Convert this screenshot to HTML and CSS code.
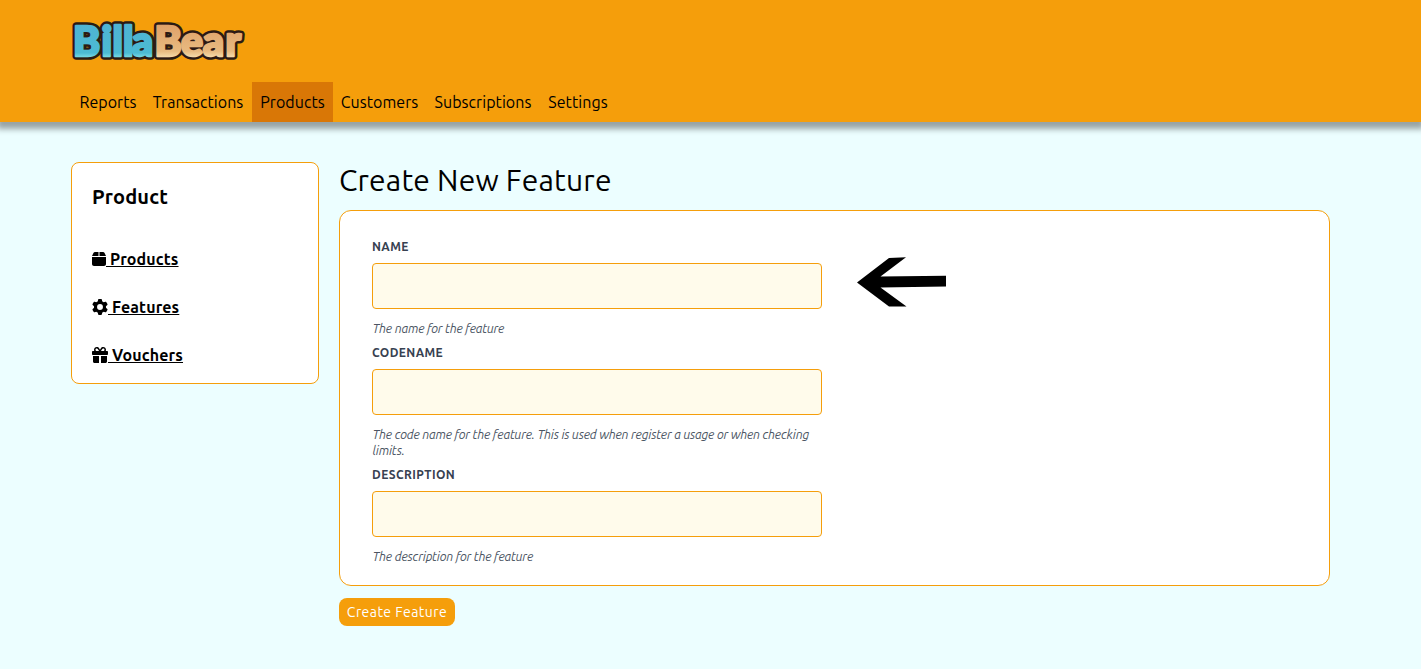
FILE: index.html
```
<!DOCTYPE html>
<html lang="en">
<head>
<meta charset="utf-8">
<title>BillaBear</title>
<link rel="stylesheet" href="styles.css">
</head>
<body>
<header class="header">
  <svg class="logo" viewBox="0 0 176 42" role="img" aria-label="BillaBear">
    <defs>
      <linearGradient id="blue" gradientUnits="userSpaceOnUse" x1="0" y1="4" x2="0" y2="38"><stop offset="0" stop-color="#4fb3d2"/><stop offset="0.85" stop-color="#4cbad3"/><stop offset="1" stop-color="#7fdfe6"/></linearGradient>
      <linearGradient id="tan" gradientUnits="userSpaceOnUse" x1="0" y1="4" x2="0" y2="38"><stop offset="0" stop-color="#dfa068"/><stop offset="0.8" stop-color="#e8ba80"/><stop offset="1" stop-color="#f8e0b0"/></linearGradient>
    </defs>
    <g class="logo-outline">
      <text x="2 30.500 41.500 52 61" y="36">Billa</text>
      <text x="83.500 110 132 154.500" y="36">Bear</text>
    </g>
    <g class="logo-fill">
      <text x="2 30.500 41.500 52 61" y="36" fill="url(#blue)" stroke="url(#blue)">Billa</text>
      <text x="83.500 110 132 154.500" y="36" fill="url(#tan)" stroke="url(#tan)">Bear</text>
    </g>
  </svg>
  <nav class="nav">
    <a class="nav-link reports">Reports</a>
    <a class="nav-link transactions">Transactions</a>
    <a class="nav-link products active">Products</a>
    <a class="nav-link customers">Customers</a>
    <a class="nav-link subscriptions">Subscriptions</a>
    <a class="nav-link settings">Settings</a>
  </nav>
</header>
<div class="layout">
  <aside class="side">
    <h2 class="side-title">Product</h2>
    <a class="side-link"><svg class="icon box" viewBox="0 0 448 512"><path d="M50.700 58.500 0 160h208V32H93.700c-18.200 0-34.800 10.300-43 26.500zM240 160h208L397.300 58.500c-8.200-16.200-24.800-26.500-43-26.500H240v128zm208 32H0v224c0 35.300 28.700 64 64 64h320c35.300 0 64-28.700 64-64V192z"/></svg><span class="side-label">&nbsp;Products</span></a>
    <a class="side-link"><svg class="icon" viewBox="0 0 512 512"><path fill-rule="evenodd" d="M495.900 166.600c3.200 8.700.5 18.400-6.400 24.600l-43.300 39.400c1.100 8.300 1.700 16.800 1.700 25.400s-.6 17.100-1.700 25.400l43.300 39.400c6.900 6.200 9.600 15.900 6.400 24.600-4.400 11.900-9.700 23.300-15.800 34.300l-4.700 8.100c-6.600 11-14 21.400-22.100 31.200-5.900 7.200-15.700 9.600-24.500 6.800l-55.700-17.700c-13.400 10.300-28.200 18.900-44 25.400l-12.500 57.100c-2 9.100-9 16.300-18.200 17.800-13.800 2.300-28 3.500-42.500 3.500s-28.700-1.200-42.500-3.500c-9.200-1.500-16.200-8.700-18.200-17.800l-12.500-57.100c-15.800-6.500-30.600-15.100-44-25.400l-55.600 17.800c-8.800 2.800-18.600.3-24.500-6.800-8.100-9.800-15.500-20.200-22.100-31.200l-4.700-8.100c-6.100-11-11.400-22.400-15.800-34.300-3.200-8.700-.5-18.400 6.400-24.600l43.300-39.400C64.600 273.100 64 264.600 64 256s.6-17.100 1.700-25.400l-43.300-39.400c-6.900-6.200-9.600-15.900-6.400-24.600 4.400-11.900 9.700-23.300 15.800-34.300l4.700-8.100c6.600-11 14-21.400 22.100-31.200 5.900-7.200 15.700-9.600 24.500-6.800l55.700 17.700c13.400-10.300 28.200-18.900 44-25.400l12.500-57.100c2-9.100 9-16.300 18.200-17.800C227.300 1.200 241.500 0 256 0s28.700 1.200 42.500 3.500c9.200 1.500 16.200 8.700 18.200 17.800l12.500 57.100c15.800 6.500 30.600 15.100 44 25.400l55.700-17.700c8.800-2.800 18.600-.3 24.500 6.800 8.100 9.800 15.500 20.200 22.100 31.200l4.700 8.100c6.100 11 11.400 22.400 15.800 34.300zM256 350a94 94 0 1 0 0-188 94 94 0 1 0 0 188z"/></svg><span class="side-label">&nbsp;Features</span></a>
    <a class="side-link"><svg class="icon" viewBox="0 0 512 512"><path fill-rule="evenodd" d="m190.500 68.800 34.800 59.200H152c-22.100 0-40-17.900-40-40s17.900-40 40-40h2.200c14.900 0 28.800 7.900 36.300 20.800zM64 88c0 14.400 3.500 28 9.600 40H32c-17.700 0-32 14.300-32 32v64c0 17.700 14.300 32 32 32h448c17.700 0 32-14.300 32-32v-64c0-17.700-14.300-32-32-32h-41.600c6.100-12 9.600-25.600 9.600-40 0-48.600-39.400-88-88-88h-2.200c-31.900 0-61.500 16.900-77.700 44.400L256 85.500l-24.100-41C215.700 16.900 186.100 0 154.200 0H152C103.400 0 64 39.400 64 88zm336 0c0 22.100-17.900 40-40 40h-73.300l34.800-59.200c7.600-12.900 21.400-20.800 36.300-20.800h2.200c22.100 0 40 17.900 40 40zM32 288v176c0 26.500 21.500 48 48 48h144V288H32zm256 224h144c26.500 0 48-21.500 48-48V288H288v224z"/></svg><span class="side-label">&nbsp;Vouchers</span></a>
  </aside>
  <main class="main">
    <h1 class="title">Create New Feature</h1>
    <section class="card">
      <div class="fields">
        <div class="field">
          <label class="label" for="name">Name</label>
          <input class="input" id="name" type="text">
          <p class="help">The name for the feature</p>
        </div>
        <div class="field">
          <label class="label" for="code">Codename</label>
          <input class="input" id="code" type="text">
          <p class="help">The code name for the feature. This is used when register a usage or when checking limits.</p>
        </div>
        <div class="field">
          <label class="label" for="desc">Description</label>
          <input class="input" id="desc" type="text">
          <p class="help">The description for the feature</p>
        </div>
      </div>
      <svg class="arrow" viewBox="0 0 90 50"><path d="M0 25.500 32 1 49 .3 23.500 19.500 89 18.700V29.500L23.500 30.500 49.500 49.500H32z"/></svg>
    </section>
    <button class="button" type="button">Create Feature</button>
  </main>
</div>
</body>
</html>
```
FILE: styles.css
```
* { box-sizing: border-box; }
body {
  margin: 0;
  min-height: 669px;
  background: #ecfeff;
  color: #000;
  font-family: Ubuntu, "Noto Sans", sans-serif;
  font-size: 16px;
  line-height: 24px;
}
.header {
  height: 122px;
  padding: 20px 71px 0;
  background: #f59e0b;
  box-shadow: 0 4px 6px 3px rgba(0, 0, 0, 0.36);
}
.logo { display: block; width: 176px; height: 42px; margin-bottom: 20px; overflow: visible; }
.logo text { font-family: Lato, sans-serif; font-weight: 900; font-size: 41px; }
.logo-outline { fill: #2b1a14; stroke: #2b1a14; stroke-width: 7.5px; stroke-linejoin: round; }
.logo-fill { stroke-width: 2.6px; stroke-linejoin: round; }
.nav { display: flex; height: 40px; }
.nav-link { padding: 8px 0; text-align: center; white-space: nowrap; letter-spacing: 0.06px; }
.active { background: #d97706; }
.reports { width: 74px; }
.transactions { width: 107px; padding-right: 1px; }
.products { width: 81px; }
.customers { width: 94px; padding-right: 1px; }
.subscriptions { width: 113px; padding-right: 1px; }
.settings { width: 76px; }
.layout { display: flex; gap: 20px; align-items: flex-start; padding: 40px 91px 0 71px; }
.side {
  flex: none;
  width: 248px;
  height: 222px;
  padding: 20px;
  background: #fff;
  border: 1px solid #f59e0b;
  border-radius: 8px;
}
.side-title { margin: 0 0 36px; font-size: 20px; line-height: 28px; font-weight: 700; letter-spacing: 0.15px; }
.side-link { display: flex; align-items: center; height: 24px; margin-bottom: 24px; font-weight: 700; letter-spacing: 0.14px; }
.icon { flex: none; width: 16px; height: 16px; }
.icon.box { width: 14px; }
.side-label { text-decoration: underline; white-space: nowrap; }
.main { flex: 1; }
.title { margin: 0 0 12px; font-size: 30px; line-height: 36px; font-weight: 400; letter-spacing: 0.17px; }
.card {
  display: flex;
  gap: 35px;
  height: 376px;
  padding: 28px 32px 0;
  background: #fff;
  border: 1px solid #f59e0b;
  border-radius: 12px;
}
.fields { display: flex; flex-direction: column; gap: 9px; width: 450px; }
.label { display: block; margin-bottom: 8px; color: #374151; font-size: 12px; line-height: 16px; font-weight: 700; letter-spacing: 0.4px; text-transform: uppercase; }
.input { display: block; width: 450px; height: 46px; margin: 0 0 11px; padding: 12px 16px; background: #fffbeb; border: 1px solid #f59e0b; border-radius: 4px; }
.help { margin: 0; padding-left: 0.5px; color: #4b5563; font-size: 12.5px; line-height: 16px; font-style: italic; letter-spacing: -0.21px; }
.arrow { width: 90px; height: 50px; margin-top: 18px; margin-left: -0.5px; }
.button { display: block; width: 116px; height: 28px; margin-top: 12px; padding: 0; border: 0; border-radius: 8px; background: #f59e0b; color: #fff; font: 14px/20px Ubuntu, "Noto Sans", sans-serif; letter-spacing: 0.45px; white-space: nowrap; }
```
